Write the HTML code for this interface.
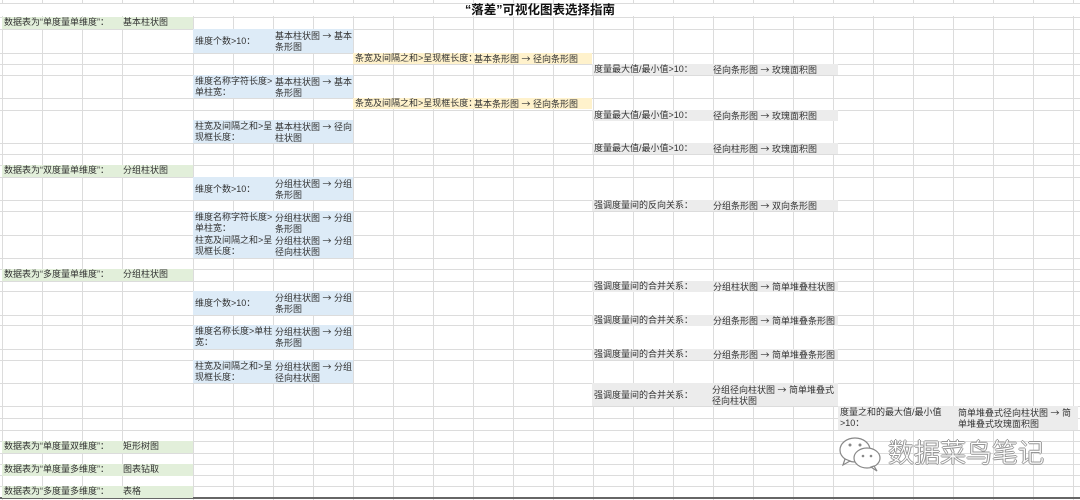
<!DOCTYPE html>
<html><head><meta charset="utf-8"><style>
*{margin:0;padding:0;box-sizing:border-box}
body{width:1080px;height:500px;background:#fff;position:relative;overflow:hidden;font-family:"Liberation Sans","Noto Sans CJK SC",sans-serif;font-size:9px;color:#333}
.grid{position:absolute;top:0;height:500px;background-image:linear-gradient(90deg,#dcdcdc 1px,transparent 1px);background-size:40px 100%}
.h{position:absolute;left:0;width:1080px;height:1px;background:#dcdcdc}
.v{position:absolute;top:0;height:500px;width:1px;background:#dcdcdc}
.c{position:absolute;line-height:11px;padding-left:2px;white-space:nowrap}
.g{background:#e2efda}.b{background:#ddebf7}.y{background:#fff2cc}.k{background:#ececec}
.t{position:absolute;white-space:normal;line-height:11px}
.a{font-family:"Noto Sans CJK SC",sans-serif}
</style></head><body>
<div class="grid" style="left:2px;width:121px"></div>
<div class="grid" style="left:193px;width:887px"></div>
<div class="v" style="left:193px"></div>
<div style="position:absolute;left:0;top:4px;width:1080px;height:12px;background:#fff"></div>
<div class="h" style="top:3px"></div>
<div class="h" style="top:17px"></div><div class="h" style="top:29px"></div><div class="h" style="top:53px"></div><div class="h" style="top:64px"></div><div class="h" style="top:75px"></div><div class="h" style="top:98px"></div><div class="h" style="top:110px"></div><div class="h" style="top:143px"></div><div class="h" style="top:154px"></div><div class="h" style="top:165px"></div><div class="h" style="top:177px"></div><div class="h" style="top:200px"></div><div class="h" style="top:211px"></div><div class="h" style="top:235px"></div><div class="h" style="top:258px"></div><div class="h" style="top:269px"></div><div class="h" style="top:281px"></div><div class="h" style="top:291px"></div><div class="h" style="top:315px"></div><div class="h" style="top:325px"></div><div class="h" style="top:349px"></div><div class="h" style="top:360px"></div><div class="h" style="top:383px"></div><div class="h" style="top:406px"></div><div class="h" style="top:418px"></div><div class="h" style="top:430px"></div><div class="h" style="top:441px"></div><div class="h" style="top:453px"></div><div class="h" style="top:464px"></div><div class="h" style="top:475px"></div><div class="h" style="top:486px"></div>
<div style="position:absolute;left:0;top:497px;width:1080px;height:2px;background:#666"></div>
<div style="position:absolute;left:0;top:3px;width:1080px;text-align:center;font-weight:bold;font-size:12.5px;line-height:14px;color:#111">“落差”可视化图表选择指南</div>

<div class="c g" style="left:2px;top:17px;width:191px;height:12px">数据表为“单度量单维度”：<span style="position:absolute;left:121px">基本柱状图</span></div>
<div class="c g" style="left:2px;top:165px;width:191px;height:12px">数据表为“双度量单维度”：<span style="position:absolute;left:121px">分组柱状图</span></div>
<div class="c g" style="left:2px;top:269px;width:191px;height:12px">数据表为“多度量单维度”：<span style="position:absolute;left:121px">分组柱状图</span></div>
<div class="c g" style="left:2px;top:441px;width:191px;height:12px">数据表为“单度量双维度”：<span style="position:absolute;left:121px">矩形树图</span></div>
<div class="c g" style="left:2px;top:464px;width:191px;height:12px">数据表为“单度量多维度”：<span style="position:absolute;left:121px">图表钻取</span></div>
<div class="c g" style="left:2px;top:486px;width:191px;height:12px">数据表为“多度量多维度”：<span style="position:absolute;left:121px">表格</span></div>

<div class="b" style="position:absolute;left:193px;top:29px;width:160px;height:24px"><div class="t" style="left:2px;top:7px">维度个数&gt;10：</div><div class="t" style="left:82px;top:1px;width:78px">基本柱状图 <span class="a">→</span> 基本条形图</div></div>
<div class="b" style="position:absolute;left:193px;top:75px;width:160px;height:23px"><div class="t" style="left:2px;top:1px;width:80px">维度名称字符长度&gt;单柱宽：</div><div class="t" style="left:82px;top:1px;width:78px">基本柱状图 <span class="a">→</span> 基本条形图</div></div>
<div class="b" style="position:absolute;left:193px;top:120px;width:160px;height:23px"><div class="t" style="left:2px;top:1px;width:80px">柱宽及间隔之和&gt;呈现框长度：</div><div class="t" style="left:82px;top:1px;width:78px">基本柱状图 <span class="a">→</span> 径向柱状图</div></div>
<div class="b" style="position:absolute;left:193px;top:177px;width:160px;height:23px"><div class="t" style="left:2px;top:7px">维度个数&gt;10：</div><div class="t" style="left:82px;top:1px;width:78px">分组柱状图 <span class="a">→</span> 分组条形图</div></div>
<div class="b" style="position:absolute;left:193px;top:211px;width:160px;height:47px"><div class="t" style="left:2px;top:1px;width:80px">维度名称字符长度&gt;单柱宽：</div><div class="t" style="left:82px;top:1px;width:78px">分组柱状图 <span class="a">→</span> 分组条形图</div><div class="t" style="left:2px;top:24px;width:80px">柱宽及间隔之和&gt;呈现框长度：</div><div class="t" style="left:82px;top:24px;width:78px">分组柱状图 <span class="a">→</span> 分组径向柱状图</div></div>
<div class="b" style="position:absolute;left:193px;top:291px;width:160px;height:24px"><div class="t" style="left:2px;top:7px">维度个数&gt;10：</div><div class="t" style="left:82px;top:1px;width:78px">分组柱状图 <span class="a">→</span> 分组条形图</div></div>
<div class="b" style="position:absolute;left:193px;top:325px;width:160px;height:24px"><div class="t" style="left:2px;top:1px;width:80px">维度名称长度&gt;单柱宽：</div><div class="t" style="left:82px;top:1px;width:78px">分组柱状图 <span class="a">→</span> 分组条形图</div></div>
<div class="b" style="position:absolute;left:193px;top:360px;width:160px;height:23px"><div class="t" style="left:2px;top:1px;width:80px">柱宽及间隔之和&gt;呈现框长度：</div><div class="t" style="left:82px;top:1px;width:78px">分组柱状图 <span class="a">→</span> 分组径向柱状图</div></div>

<div class="c y" style="left:353px;top:53px;width:239px;height:11px">条宽及间隔之和&gt;呈现框长度：<span style="position:absolute;left:121px">基本条形图 <span class="a">→</span> 径向条形图</span></div>
<div class="c y" style="left:353px;top:98px;width:239px;height:11px">条宽及间隔之和&gt;呈现框长度：<span style="position:absolute;left:121px">基本条形图 <span class="a">→</span> 径向条形图</span></div>

<div class="c k" style="left:592px;top:64px;width:246px;height:11px">度量最大值/最小值&gt;10：<span style="position:absolute;left:121px">径向条形图 <span class="a">→</span> 玫瑰面积图</span></div>
<div class="c k" style="left:592px;top:110px;width:246px;height:11px">度量最大值/最小值&gt;10：<span style="position:absolute;left:121px">径向条形图 <span class="a">→</span> 玫瑰面积图</span></div>
<div class="c k" style="left:592px;top:143px;width:246px;height:11px">度量最大值/最小值&gt;10：<span style="position:absolute;left:121px">径向柱形图 <span class="a">→</span> 玫瑰面积图</span></div>
<div class="c k" style="left:592px;top:200px;width:246px;height:11px">强调度量间的反向关系：<span style="position:absolute;left:121px">分组条形图 <span class="a">→</span> 双向条形图</span></div>
<div class="c k" style="left:592px;top:281px;width:246px;height:11px">强调度量间的合并关系：<span style="position:absolute;left:121px">分组柱状图 <span class="a">→</span> 简单堆叠柱状图</span></div>
<div class="c k" style="left:592px;top:315px;width:246px;height:11px">强调度量间的合并关系：<span style="position:absolute;left:121px">分组条形图 <span class="a">→</span> 简单堆叠条形图</span></div>
<div class="c k" style="left:592px;top:349px;width:246px;height:11px">强调度量间的合并关系：<span style="position:absolute;left:121px">分组条形图 <span class="a">→</span> 简单堆叠条形图</span></div>
<div class="k" style="position:absolute;left:592px;top:383px;width:246px;height:23px"><div class="t" style="left:2px;top:7px">强调度量间的合并关系：</div><div class="t" style="left:120px;top:1px;width:126px">分组径向柱状图 <span class="a">→</span> 简单堆叠式径向柱状图</div></div>
<div class="k" style="position:absolute;left:838px;top:406px;width:240px;height:24px"><div class="t" style="left:2px;top:1px;width:112px">度量之和的最大值/最小值&gt;10：</div><div class="t" style="left:120px;top:1px;width:120px">简单堆叠式径向柱状图 <span class="a">→</span> 简单堆叠式玫瑰面积图</div></div>

<svg style="position:absolute;left:838px;top:436px" width="46" height="36" viewBox="0 0 46 36"><g fill="#fff" stroke="#888" stroke-width="1.2"><ellipse cx="17" cy="14" rx="15" ry="12"/><path d="M7 23 L5 29 L12 25Z"/><ellipse cx="29" cy="22" rx="13" ry="10"/><path d="M36 30 L39 35 L33 31Z"/></g><g fill="#888"><circle cx="12" cy="9" r="1.5"/><circle cx="22" cy="9" r="1.5"/><circle cx="25" cy="20" r="1.3"/><circle cx="33" cy="20" r="1.3"/></g></svg>
<div style="position:absolute;left:888px;top:435px;font-size:26px;line-height:34px;color:#fff;font-family:'Noto Sans CJK SC',sans-serif;font-weight:300;text-shadow:0 0 1px #888,1px 0 0 #999,-1px 0 0 #999,0 1px 0 #999,0 -1px 0 #999">数据菜鸟笔记</div>
</body></html>
